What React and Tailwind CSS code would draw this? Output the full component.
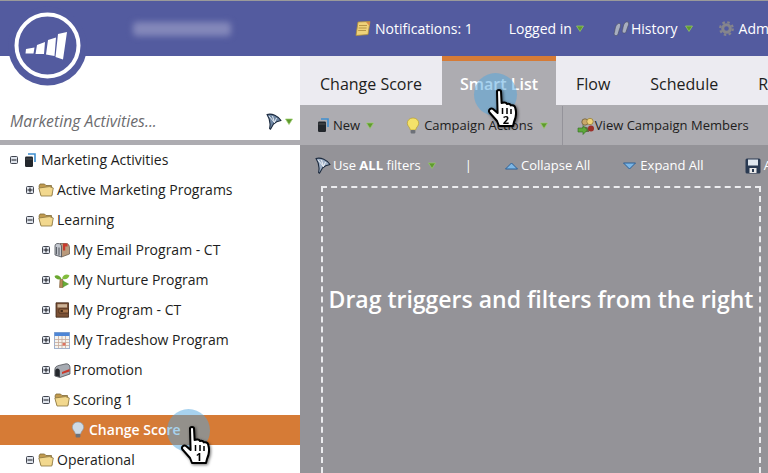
import React from "react";

const Arrow = ({ className = "" }) => (
  <svg width="8" height="7" viewBox="0 0 8 7" className={`shrink-0 ${className}`}>
    <path d="M0.5 1 H7.5 L4 6.5 Z" fill="#5f9a2e" stroke="#9ccf6c" strokeWidth="0.7" />
  </svg>
);

const Box = ({ open }) => (
  <svg width="8" height="8" viewBox="0 0 8 8" className="shrink-0">
    <rect x="0.5" y="0.5" width="7" height="7" rx="1" fill="#dfe4ec" stroke="#41454f" />
    <path d="M1.5 4H6.5" stroke="#15171c" strokeWidth="1" />
    {!open && <path d="M4 1.5V6.5" stroke="#15171c" strokeWidth="1" />}
  </svg>
);

const Folder = () => (
  <svg width="16" height="14" viewBox="0 0 16 14" className="shrink-0">
    <path d="M1 3 L2 1 H6.5 L8 2.5 H13.5 L14 12 H3 Z" fill="#c19a4e" stroke="#7f6a38" strokeWidth="0.8" />
    <path d="M0.8 5 L11.5 3.6 L15.3 5 L13.8 13 H3 Z" fill="#f2d88e" stroke="#8c7640" strokeWidth="0.8" />
  </svg>
);

const Book = () => (
  <svg width="12" height="15" viewBox="0 0 12 15" className="shrink-0">
    <path d="M4 1 H11 V9" fill="none" stroke="#3f8fd0" strokeWidth="1.6" />
    <rect x="1" y="3.5" width="8" height="10.5" rx="1.2" fill="#23272c" />
    <path d="M1.5 6 H8.5" stroke="#666" strokeWidth="0.7" />
  </svg>
);

const Bulb = ({ on }) => (
  <svg width="14" height="18" viewBox="0 0 14 18" className="shrink-0">
    <path d="M7 1 C3.4 1 1.3 3.5 1.3 6.3 C1.3 9 3.8 10 4.4 13 H9.6 C10.2 10 12.7 9 12.7 6.3 C12.7 3.5 10.6 1 7 1Z" fill={on ? "#f4e26a" : "#cfdbe6"} stroke={on ? "#b79e2d" : "#8b99a8"} strokeWidth="0.7" />
    <rect x="4.6" y="13" width="4.8" height="3.4" rx="0.8" fill="#6d7178" />
  </svg>
);

const Funnel = ({ light }) => (
  <svg width="16" height="17" viewBox="0 0 16 17" className="shrink-0">
    <path d="M1 1.5 C6 0 12 3 15 7.5 C12 8 9.5 9 7.5 11 L4.5 16.2 L3.6 15.5 C4.6 11 4 6 1 1.5Z" fill={light ? "#9fb0c6" : "#6f87a4"} stroke="#1c2a3e" strokeWidth="1.1" strokeLinejoin="round" />
    <path d="M3 3 L8.5 9.5 M6.5 3 L8.5 9.5 M10.5 5 L8.5 9.5" stroke="#f3f6fa" strokeWidth="0.9" fill="none" />
  </svg>
);

const Hand = ({ n }) => (
  <svg width="38" height="44" viewBox="0 0 38 44" style={{ filter: "drop-shadow(1px 1px 1.5px rgba(0,0,0,.55))" }}>
    <path d="M11 3.5 C11 1.5 15 1.5 15 3.5 L15.6 15 L18 14.6 C19.5 14.4 20.6 15.2 21 16 C22.6 15.4 24.3 16 24.8 17.4 C26.6 16.8 28.6 17.6 29.2 19.6 C30.2 23 30.4 29 28 34 L27 38 H13 L11 33 L3.5 24.5 C1.8 22 4.8 19.4 7 21 L11.6 25 Z" fill="#fff" stroke="#000" strokeWidth="2" strokeLinejoin="round" />
    <path d="M16.5 20 V26 M21 20 V26 M25 21 V26" stroke="#000" strokeWidth="1.5" />
    <text x="20" y="36" textAnchor="middle" fontSize="11" fontWeight="700" fill="#000" fontFamily="Open Sans, sans-serif">{n}</text>
  </svg>
);

const Row = ({ indent, open, box = true, icon, children, active }) => (
  <div className={`h-[30px] shrink-0 flex items-center text-[14px] ${active ? "bg-[#d67b36] text-white font-semibold" : "text-[#1d1d20]"}`} style={{ paddingLeft: indent }}>
    {box && <Box open={open} />}
    <span className={`${box ? "ml-[4px]" : ""} w-[16px] flex justify-center shrink-0`}>{icon}</span>
    <span className="ml-[3px] whitespace-nowrap mb-[2px]">{children}</span>
  </div>
);

const Mail = () => (
  <svg width="16" height="16" viewBox="0 0 16 16" className="shrink-0">
    <path d="M6 1.5 H12 C14.5 1.5 15.5 3.5 15.5 6 V12 L7.5 15 Z" fill="#b99a7c" stroke="#5e5248" strokeWidth="0.7" />
    <path d="M1 4 C1 2 2.5 1.5 4 1.5 C6.5 1.5 7.5 3 7.5 5 V15 L1 13Z" fill="#c4c8cf" stroke="#4b4e55" strokeWidth="0.8" />
    <path d="M2.5 5 V12.5 M5 5.5 V13.5" stroke="#5b5f66" strokeWidth="1.1" />
    <path d="M9 1.5 H13.5 V4.5 H11.2 V8.5 H9 Z" fill="#c93a2c" />
  </svg>
);
const Sprout = () => (
  <svg width="16" height="15" viewBox="0 0 16 15" className="shrink-0">
    <path d="M6 6.5 L5.5 14.5 H9 L9 6.5Z" fill="#b98a57" stroke="#7c5a34" strokeWidth="0.6" />
    <path d="M7.5 6 C6 2.5 3 1.5 0.5 3 C1.2 6 4.5 7.5 7.5 6Z" fill="#6aa72f" />
    <path d="M8 5.5 C9 2 12.5 0.5 15.5 2.5 C14.5 6 11 7 8 5.5Z" fill="#82bc3d" />
    <path d="M9 8 L14.5 11 L9 14Z" fill="#69ad38" stroke="#4a8a25" strokeWidth="0.5" />
  </svg>
);
const Prog = () => (
  <svg width="16" height="16" viewBox="0 0 16 16" className="shrink-0">
    <path d="M2 0.8 H14.5 V15.2 H2 Z" fill="#7a5136" stroke="#3f2716" strokeWidth="0.8" />
    <path d="M3.5 2.2 H13 V5.5 H3.5Z" fill="#cdb498" />
    <path d="M5 7 H14.5 V11 H5Z" fill="#a8764d" stroke="#3f2716" strokeWidth="0.7" />
    <rect x="6.5" y="8.2" width="2.4" height="1.6" fill="#2d1b0e" />
  </svg>
);
const Cal = () => (
  <svg width="16" height="17" viewBox="0 0 16 17" className="shrink-0">
    <rect x="0.5" y="0.5" width="15" height="16" fill="#f5f3ee" stroke="#9fb2cf" />
    <rect x="0.5" y="0.5" width="15" height="3.5" fill="#4e86d6" />
    <path d="M4.5 4V16.5M8 4V16.5M11.5 4V16.5M.5 7.5H15.5M.5 10.5H15.5M.5 13.5H15.5" stroke="#c7a99a" strokeWidth="0.8" />
    <rect x="8.5" y="11" width="3" height="2.5" fill="#e0735f" />
  </svg>
);
const Box2 = () => (
  <svg width="17" height="15" viewBox="0 0 17 15" className="shrink-0">
    <path d="M0.8 7 C0.8 3.5 3 3 5 2.4 L12 0.8 C14.5 0.5 16 2.5 16 4.5 V11 L6 14.5 L0.8 13Z" fill="#a7abb2" stroke="#3d4046" strokeWidth="0.7" />
    <path d="M1.2 8 C1.2 4.5 5.8 4.5 5.8 8 V14 L1.2 12.8Z" fill="#25282d" />
    <path d="M8 9 L15.5 6 V8.5 L8 11Z" fill="#c93a2c" />
  </svg>
);

const Sep = () => <div className="w-px h-[39px] bg-[#94939a]" />;

export default function App() {
  return (
    <div className="relative w-[768px] h-[473px] overflow-hidden bg-white font-['Open_Sans',sans-serif]">
      <div className="h-[1px] bg-[#9a9a9a]" />
      <header className="h-[55px] bg-[#535b9f] flex items-center text-white text-[14px] font-medium relative whitespace-nowrap [&>*]:shrink-0">
        <div className="ml-[133px] w-[98px] h-[14px] bg-[#8488ba] blur-[3px] rounded-sm" />
        <svg width="16" height="15" viewBox="0 0 16 15" className="ml-[124px]">
          <path d="M3 1 L15 0.5 L13 13.5 L1 14.5 Z" fill="#efd27a" stroke="#b08f3a" strokeWidth="0.8" />
          <path d="M4 4.5 H12 M3.6 7 H11.6 M3.2 9.5 H11" stroke="#a8873a" strokeWidth="0.8" />
          <path d="M11 1 L15 1 L14.5 5Z" fill="#d58a4a" />
        </svg>
        <span className="ml-[4px]">Notifications: 1</span>
        <span className="ml-[36px]">Logged in</span>
        <Arrow className="ml-[4px]" />
        <svg width="17" height="15" viewBox="0 0 17 15" className="ml-[29px]">
          <path d="M2.5 14.5 C0.8 14 0.8 12.5 1.5 11 C2 9.5 1.8 8 2.5 6 C3.4 3.4 5.5 1.8 6.8 2.5 C8.2 3.4 7.4 6 6.6 8 C6 9.8 5.6 11 5.2 12.5 C4.8 14 4 14.8 2.5 14.5Z" fill="#a8aec0" stroke="#4d5266" strokeWidth="0.7" />
          <path d="M10.5 12 C9 11.6 9 10 9.6 8.6 C10 7 10 6 10.6 4 C11.4 1.6 13.6 0.2 15 1 C16.4 2 15.4 4.4 14.6 6.2 C14 8 13.6 9 13.2 10.4 C12.8 11.6 12 12.4 10.5 12Z" fill="#a8aec0" stroke="#4d5266" strokeWidth="0.7" />
        </svg>
        <span className="ml-[1px]">History</span>
        <Arrow className="ml-[7px]" />
        <svg width="15" height="15" viewBox="0 0 15 15" className="ml-[26px]">
          <circle cx="7.5" cy="7.5" r="3.8" fill="none" stroke="#85858c" strokeWidth="3" />
          <circle cx="7.5" cy="7.5" r="6.3" fill="none" stroke="#85858c" strokeWidth="2.2" strokeDasharray="2.5 2.45" />
        </svg>
        <span className="ml-[5px]">Admin</span>
      </header>

      <div className="flex h-[417px] overflow-hidden">
        <aside className="w-[300px] shrink-0 flex flex-col">
          <div className="h-[84px] shrink-0 flex items-end justify-between pb-[8px] pl-[10px] pr-[7px]">
            <span className="text-[15.8px] italic text-[#6b6b6e] leading-[22px]">Marketing Activities...</span>
            <div className="flex items-center gap-[3px] mb-[2px]">
              <Funnel />
              <Arrow />
            </div>
          </div>
          <div className="h-[5px] shrink-0 bg-[#adacb1]" />
          <div className="flex flex-col">
            <Row indent={10} open icon={<Book />}>Marketing Activities</Row>
            <Row indent={26} icon={<Folder />}>Active Marketing Programs</Row>
            <Row indent={26} open icon={<Folder />}>Learning</Row>
            <Row indent={42} icon={<Mail />}>My Email Program - CT</Row>
            <Row indent={42} icon={<Sprout />}>My Nurture Program</Row>
            <Row indent={42} icon={<Prog />}>My Program - CT</Row>
            <Row indent={42} icon={<Cal />}>My Tradeshow Program</Row>
            <Row indent={42} icon={<Box2 />}>Promotion</Row>
            <Row indent={42} open icon={<Folder />}>Scoring 1</Row>
            <Row indent={70} box={false} active icon={<Bulb />}>Change Score</Row>
            <Row indent={26} open icon={<Folder />}>Operational</Row>
          </div>
        </aside>

        <main className="flex-1 min-w-0 flex flex-col">
          <nav className="h-[49px] shrink-0 bg-[#ecebf1] flex text-[16px] text-[#1d1d20] whitespace-nowrap [&>*]:shrink-0">
            <div className="pl-[20px] pt-[16px] w-[142px]">Change Score</div>
            <div className="w-[114px] bg-[#adacb1] border-t-[5px] border-[#d67b36] text-white font-semibold pt-[11px] text-center">Smart List</div>
            <div className="px-[20px] pt-[16px]">Flow</div>
            <div className="px-[20px] pt-[16px]">Schedule</div>
            <div className="pl-[20px] pt-[16px]">Results</div>
          </nav>
          <div className="h-[40px] shrink-0 bg-[#adacb1] flex items-center text-[13px] text-[#1d1d20] whitespace-nowrap pt-[1px]">
            <span className="ml-[17px] flex"><Book /></span>
            <span className="ml-[4px]">New</span>
            <Arrow className="ml-[6px]" />
            <span className="ml-[32px] flex"><Bulb on /></span>
            <span className="ml-[4px]">Campaign Actions</span>
            <Arrow className="ml-[7px]" />
            <div className="ml-[14px]"><Sep /></div>
            <svg width="18" height="18" viewBox="0 0 18 18" className="ml-[14px] shrink-0">
              <circle cx="8" cy="5" r="3.2" fill="#c9a869" stroke="#5e5030" strokeWidth="0.7" />
              <circle cx="13" cy="4.5" r="3.2" fill="#efd27a" stroke="#8a7430" strokeWidth="0.7" />
              <path d="M4 13 C4 8.5 12 8.5 12 13 V15 H4Z" fill="#6b6a4d" />
              <circle cx="14" cy="11.5" r="3" fill="#9c2f28" />
              <path d="M1 11 H6 V8.5 L10.5 13 L6 17.5 V15 H1Z" fill="#5da83a" stroke="#2f6d1e" strokeWidth="0.6" />
            </svg>
            <span>View Campaign Members</span>
          </div>
          <div className="flex-1 min-h-0 bg-[#949398] flex flex-col">
            <div className="h-[41px] flex items-center text-[13px] text-white font-medium whitespace-nowrap shrink-0">
              <span className="ml-[15px] flex"><Funnel light /></span>
              <span className="ml-[2px]">Use <b>ALL</b> filters</span>
              <Arrow className="ml-[7px]" />
              <span className="ml-[29px] font-normal">|</span>
              <svg width="13" height="8" viewBox="0 0 13 8" className="ml-[33px] shrink-0"><path d="M6.5 1 L12.5 7 H0.5Z" fill="#7db7e6" stroke="#2b5f95" strokeWidth="1" /></svg>
              <span className="ml-[3px]">Collapse All</span>
              <svg width="13" height="8" viewBox="0 0 13 8" className="ml-[33px] shrink-0"><path d="M6.5 7 L12.5 1 H0.5Z" fill="#7db7e6" stroke="#2b5f95" strokeWidth="1" /></svg>
              <span className="ml-[4px]">Expand All</span>
              <svg width="16" height="16" viewBox="0 0 16 16" className="ml-[41px] shrink-0">
                <rect x="0.5" y="0.5" width="15" height="15" rx="1.5" fill="#2a3a52" />
                <rect x="3" y="1.5" width="10" height="6" fill="#dfe6ee" />
                <rect x="4.5" y="10" width="7" height="5" fill="#e8e8e8" />
                <rect x="7" y="11" width="2" height="3" fill="#2a3a52" />
              </svg>
              <span className="ml-[3px]">Auto</span>
            </div>
            <div className="ml-[21px] mr-[7px] flex-1 border-2 border-dashed border-[#ececef] border-b-0 flex justify-center pt-[95px]">
              <span className="text-[23px] font-semibold text-white whitespace-nowrap leading-[32px]">Drag triggers and filters from the right</span>
            </div>
          </div>
        </main>
      </div>

      {/* logo */}
      <svg width="96" height="96" viewBox="0 0 96 96" className="absolute left-0 top-0">
        <circle cx="47.5" cy="46" r="39.5" fill="#535b9f" />
        <circle cx="47.5" cy="45.5" r="31" fill="none" stroke="#fff" strokeWidth="4" />
        <path d="M26 49 L34.5 47.5 L33.5 53.5 L25.5 53.5Z M37 45 L45 42 L44 54 L35.5 54Z M48 40 L56 37.5 L54.5 56 L46 54.5Z M58 34 L67 32 L63 59.5 L55.5 57Z" fill="#fff" />
      </svg>

      {/* click markers */}
      <div className="absolute left-[167px] top-[409px] w-[43px] h-[43px] rounded-full bg-[#50a6df]/50" />
      <div className="absolute left-[474px] top-[73px] w-[43px] h-[43px] rounded-full bg-[#50a6df]/50" />
      <div className="absolute left-[179px] top-[425px]"><Hand n="1" /></div>
      <div className="absolute left-[486px] top-[88px]"><Hand n="2" /></div>
    </div>
  );
}
